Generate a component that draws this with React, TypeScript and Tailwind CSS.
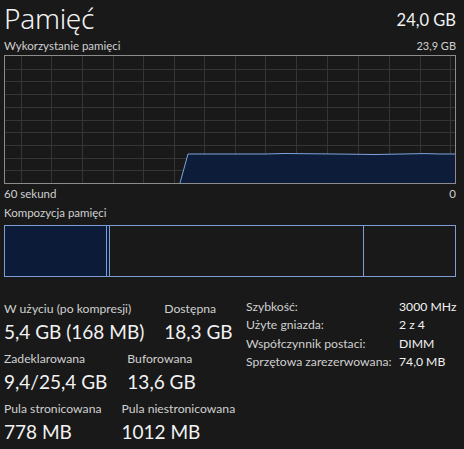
import React from "react";

const W = 450;
const H = 127;

function Graph() {
  const vx = [16, 46, 77, 108, 138, 169, 199, 230, 260, 291, 322, 353, 384, 415, 445];
  const hy = [12.7, 25.4, 38.1, 50.8, 63.5, 76.2, 88.9, 101.6, 114.3];
  const pts: [number, number][] = [
    [175, H],
    [183, 98],
    [260, 98],
    [280, 97.5],
    [330, 98],
    [370, 98.5],
    [420, 97.6],
    [435, 98],
    [W, 98],
  ];
  const line = pts.map((p, i) => `${i === 0 ? "M" : "L"}${p[0]} ${p[1]}`).join(" ");
  const area = `${line} L${W} ${H} Z`;
  return (
    <svg width={W} height={H} className="block">
      <rect x={0} y={0} width={W} height={H} fill="#191919" />
      {vx.map((x) => (
        <line key={"v" + x} x1={x + 0.5} y1={0} x2={x + 0.5} y2={H} stroke="#353535" strokeWidth={1} />
      ))}
      {hy.map((y) => (
        <line key={"h" + y} x1={0} y1={Math.round(y) + 0.5} x2={W} y2={Math.round(y) + 0.5} stroke="#353535" strokeWidth={1} />
      ))}
      <path d={area} fill="#0c1c3b" fillOpacity={0.95} />
      <path d={line} fill="none" stroke="#7ea5dc" strokeWidth={1} />
    </svg>
  );
}

function Stat({ label, value }: { label: string; value: string }) {
  return (
    <div className="flex flex-col flex-none whitespace-nowrap">
      <span className="text-[12.2px] leading-[16px] text-[#d0d0d0]">{label}</span>
      <span className="text-[19px] leading-[26px] mt-[2px]">{value}</span>
    </div>
  );
}

export default function App() {
  return (
    <div
      className="w-[464px] h-[449px] bg-[#191919] text-[#f2f2f2] overflow-hidden pl-[4px] pr-[8px] whitespace-nowrap"
      style={{ fontFamily: 'Lato, "Noto Sans", sans-serif' }}
    >
      <div className="flex items-end justify-between h-[36px]">
        <div
          className="text-[28px] leading-[36px] font-light tracking-[-0.3px]"
          style={{ fontFamily: '"Noto Sans", sans-serif' }}
        >
          Pamięć
        </div>
        <div className="text-[16.5px] leading-[20px] mb-[6px]">24,0 GB</div>
      </div>
      <div className="flex justify-between items-end text-[11.5px] leading-[16px] text-[#d0d0d0] mt-[2px]">
        <span>Wykorzystanie pamięci</span>
        <span className="text-[11px]">23,9 GB</span>
      </div>
      <div className="mt-[1px] border border-[#8c8c8c] w-[452px] h-[129px]">
        <Graph />
      </div>
      <div className="flex justify-between text-[11.5px] leading-[16px] text-[#d0d0d0] mt-[2px]">
        <span>60 sekund</span>
        <span>0</span>
      </div>
      <div className="text-[11.5px] leading-[16px] text-[#d0d0d0] mt-[3px]">Kompozycja pamięci</div>
      <div className="mt-[4px] flex h-[52px] w-[452px] border border-[#7d9ed3]">
        <div className="w-[102px] bg-[#0c1b38] border-r border-[#7d9ed3]" />
        <div className="w-[3px] bg-[#0c1b38] border-r border-[#7d9ed3]" />
        <div className="w-[254px] border-r border-[#7d9ed3]" />
        <div className="flex-1" />
      </div>

      <div className="flex mt-[24px]">
        <div className="flex flex-col w-[242px] flex-none">
          <div className="flex gap-[20px]">
            <Stat label="W użyciu (po kompresji)" value="5,4 GB (168 MB)" />
            <Stat label="Dostępna" value="18,3 GB" />
          </div>
          <div className="flex gap-[20px] mt-[6px]">
            <Stat label="Zadeklarowana" value="9,4/25,4 GB" />
            <Stat label="Buforowana" value="13,6 GB" />
          </div>
          <div className="flex gap-[20px] mt-[6px]">
            <Stat label="Pula stronicowana" value="778 MB" />
            <Stat label="Pula niestronicowana" value="1012 MB" />
          </div>
        </div>
        <div className="grid grid-cols-[153px_auto] gap-y-[2px] text-[12.2px] leading-[16.3px] text-[#d0d0d0] self-start -mt-[2px]">
          <span>Szybkość:</span>
          <span className="text-[#f2f2f2]">3000 MHz</span>
          <span>Użyte gniazda:</span>
          <span className="text-[#f2f2f2]">2 z 4</span>
          <span>Współczynnik postaci:</span>
          <span className="text-[#f2f2f2]">DIMM</span>
          <span>Sprzętowa zarezerwowana:</span>
          <span className="text-[#f2f2f2]">74,0 MB</span>
        </div>
      </div>
    </div>
  );
}
